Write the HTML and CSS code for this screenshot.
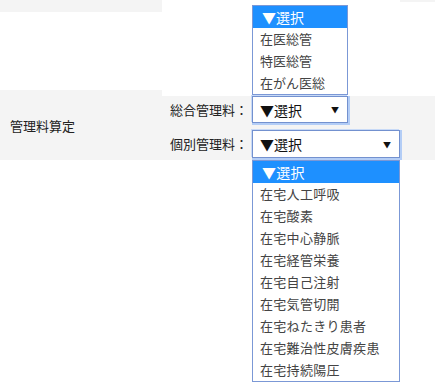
FILE: index.html
```html
<!DOCTYPE html>
<html lang="ja">
<head>
<meta charset="utf-8">
<link rel="stylesheet" href="styles.css">
</head>
<body>
<div class="page">
  <div class="row top-row">
    <div class="th-cell"><div class="th-strip"></div></div>
    <div class="td-cell top-td">
      <ul class="listbox lb-small">
        <li class="sel">▼選択</li>
        <li>在医総管</li>
        <li>特医総管</li>
        <li>在がん医総</li>
      </ul>
      <div class="corner-strip"></div>
    </div>
  </div>
  <div class="row fee-row">
    <div class="th-cell fee-th">管理料算定</div>
    <div class="td-cell fee-td">
      <div class="field">
        <span class="field-label">総合管理料：</span>
        <div class="select sel-short"><span>▼選択</span><span class="arrow">▼</span></div>
      </div>
      <div class="field">
        <span class="field-label">個別管理料：</span>
        <div class="select sel-long"><span>▼選択</span><span class="arrow">▼</span></div>
      </div>
      <ul class="listbox lb-large">
        <li class="sel">▼選択</li>
        <li>在宅人工呼吸</li>
        <li>在宅酸素</li>
        <li>在宅中心静脈</li>
        <li>在宅経管栄養</li>
        <li>在宅自己注射</li>
        <li>在宅気管切開</li>
        <li>在宅ねたきり患者</li>
        <li>在宅難治性皮膚疾患</li>
        <li>在宅持続陽圧</li>
      </ul>
    </div>
  </div>
</div>
</body>
</html>
```
FILE: styles.css
```css
* { box-sizing: border-box; }
html, body { margin: 0; padding: 0; background: #fff; }
body {
  font-family: "Noto Sans CJK JP", "Noto Sans", sans-serif;
  font-size: 13px;
  color: #222;
  width: 435px;
  height: 391px;
  overflow: hidden;
}
.row {
  display: grid;
  grid-template-columns: 162px 1fr;
}
.top-row { height: 90px; }
.th-strip { height: 12px; background: #f4f4f4; }
.top-td {
  position: relative;
  display: flex;
  justify-content: flex-end;
}
.corner-strip {
  width: 35px;
  height: 2px;
  background: #f4f4f4;
}
.fee-row { height: 70px; }
.fee-th {
  background: #f4f4f4;
  display: flex;
  align-items: center;
  padding-left: 10px;
}
.fee-td {
  position: relative;
  margin-top: 6px;
  background: #f4f4f4;
  display: flex;
  flex-direction: column;
  gap: 7px;
  padding-left: 8px;
}
.field {
  display: flex;
  align-items: center;
}
.field-label {
  width: 82px;
  line-height: 18px;
}
.select {
  display: flex;
  align-items: center;
  justify-content: space-between;
  background: #fff;
  border: 1px solid #7391cf;
  box-shadow: 1px 1px 0 1px #b3cdf6, -1px -1px 0 0 #c8daf7;
  padding: 0 8px 0 7px;
  color: #111;
  font-size: 14px;
}
.sel-short { width: 96px; height: 27px; }
.sel-long { width: 148px; height: 28px; }
.arrow { font-size: 8px; color: #111; }
.listbox {
  position: absolute;
  margin: 0;
  padding: 0;
  list-style: none;
  background: #fff;
  border: 1px solid #7b98d6;
  color: #444;
}
.listbox li {
  height: 22px;
  line-height: 22px;
  padding-left: 7px;
  white-space: nowrap;
}
.listbox li.sel {
  background: #1e90ff;
  color: #fff;
  font-size: 14px;
  padding-left: 9px;
}
.lb-small {
  left: 90px;
  top: 5px;
  width: 96px;
}
.lb-large {
  left: 90px;
  top: 64px;
  width: 148px;
}
.lb-large li { letter-spacing: 0.3px; }
```
